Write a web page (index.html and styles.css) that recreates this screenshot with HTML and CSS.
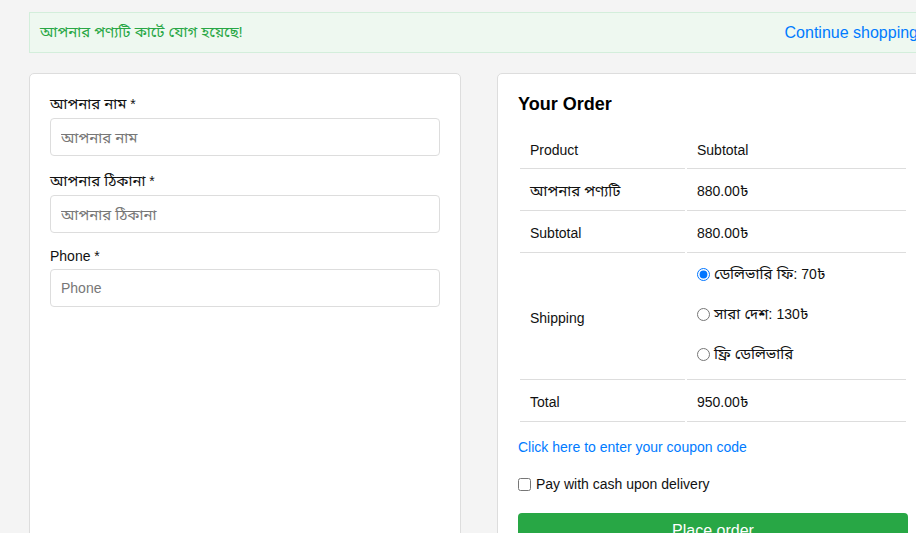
FILE: index.html
```html
<!DOCTYPE html>
<html lang="bn">
<head>
<meta charset="utf-8">
<title>Checkout</title>
<link rel="stylesheet" href="styles.css">
</head>
<body>
<div class="page">
  <div class="alert">
    <span class="alert-text bn">আপনার পণ্যটি কার্টে যোগ হয়েছে!</span>
    <a class="alert-link" href="#">Continue shopping</a>
  </div>
  <div class="columns">
    <form class="card form-card">
      <div class="field">
        <label class="label label-bn"><span class="bn">আপনার নাম</span> *</label>
        <input class="input input-bn" type="text" placeholder="আপনার নাম">
      </div>
      <div class="field">
        <label class="label label-bn"><span class="bn">আপনার ঠিকানা</span> *</label>
        <input class="input input-bn" type="text" placeholder="আপনার ঠিকানা">
      </div>
      <div class="field">
        <label class="label label-en">Phone *</label>
        <input class="input" type="text" placeholder="Phone">
      </div>
    </form>
    <div class="card order-card">
      <h3 class="order-title">Your Order</h3>
      <table class="order-table">
        <colgroup><col class="col-a"><col class="col-b"></colgroup>
        <thead>
          <tr><th>Product</th><th>Subtotal</th></tr>
        </thead>
        <tbody>
          <tr><td><span class="bn">আপনার পণ্যটি</span></td><td>880.00<span class="bn">৳</span></td></tr>
          <tr><td>Subtotal</td><td>880.00<span class="bn">৳</span></td></tr>
          <tr>
            <td>Shipping</td>
            <td class="ship-cell">
              <ul class="ship-list">
                <li><label class="ship-opt"><input type="radio" name="ship" checked><span class="bn">ডেলিভারি ফি:</span>&nbsp;70<span class="bn">৳</span></label></li>
                <li><label class="ship-opt"><input type="radio" name="ship"><span class="bn">সারা দেশ:</span>&nbsp;130<span class="bn">৳</span></label></li>
                <li><label class="ship-opt"><input type="radio" name="ship"><span class="bn">ফ্রি ডেলিভারি</span></label></li>
              </ul>
            </td>
          </tr>
          <tr><td>Total</td><td>950.00<span class="bn">৳</span></td></tr>
        </tbody>
      </table>
      <a class="coupon" href="#">Click here to enter your coupon code</a>
      <label class="cod"><input type="checkbox">Pay with cash upon delivery</label>
      <button class="place" type="button">Place order</button>
    </div>
  </div>
</div>
</body>
</html>
```
FILE: styles.css
```css
html, body {
  margin: 0;
  padding: 0;
  background: #f4f4f4;
  overflow: hidden;
}
body {
  font-family: "Liberation Sans", "Noto Sans Bengali", "Lohit Bengali", "FreeSans", sans-serif;
  font-size: 14px;
  color: #111;
}
.bn {
  font-size: 15px;
}
.page {
  width: 900px;
  padding: 12px 0 0 29px;
}
.alert {
  display: flex;
  justify-content: space-between;
  align-items: center;
  background: #eef8f0;
  border: 1px solid #d3eedb;
  padding: 0 10px;
  height: 39px;
}
.alert-text {
  color: #28a745;
}
.alert-link {
  color: #007bff;
  text-decoration: none;
  font-size: 16px;
}
.columns {
  display: flex;
  gap: 36px;
  margin-top: 20px;
  align-items: stretch;
}
.card {
  box-sizing: border-box;
  width: 432px;
  background: #fff;
  border: 1px solid #ddd;
  border-radius: 5px;
  padding: 20px;
  min-height: 600px;
}
.field {
  display: flex;
  flex-direction: column;
  margin-bottom: 15px;
}
.label {
  display: block;
  margin-bottom: 5px;
  color: #111;
}
.label-bn { height: 19px; line-height: 19px; }
.label-en { height: 16px; line-height: 16px; }
.input {
  box-sizing: border-box;
  height: 38px;
  width: 100%;
  border: 1px solid #ddd;
  border-radius: 4px;
  padding: 0 10px;
  font-family: inherit;
  font-size: 14px;
  color: #333;
  margin: 0;
}
.input-bn { font-size: 15px; }
.input::placeholder { color: #777; }
.order-title {
  margin: 0 0 12px;
  font-size: 18px;
  font-weight: bold;
  color: #000;
}
.order-table {
  width: 100%;
  border-collapse: separate;
  border-spacing: 2px;
  table-layout: fixed;
}
.col-a { width: 165px; }
.order-table th,
.order-table td {
  text-align: left;
  font-weight: normal;
  border-bottom: 1px solid #ddd;
  padding: 10px 10px 9px;
  height: 20px;
  line-height: 20px;
  vertical-align: middle;
  color: #111;
}
.order-table th { padding: 11px 10px 8px; }
.order-table td.ship-cell { padding: 9px 10px 15px; }
.ship-list {
  list-style: none;
  margin: 0;
  padding: 0;
  display: flex;
  flex-direction: column;
  gap: 20px;
}
.ship-opt {
  display: flex;
  align-items: center;
  height: 20px;
}
.ship-opt input {
  margin: 0 4px 0 0;
  width: 13px;
  height: 13px;
}
.coupon {
  display: block;
  margin-top: 13px;
  line-height: 20px;
  color: #007bff;
  text-decoration: none;
}
.cod {
  display: flex;
  align-items: center;
  margin-top: 17px;
  line-height: 20px;
}
.cod input {
  margin: 0 5px 0 0;
  width: 13px;
  height: 13px;
}
.place {
  display: block;
  width: 100%;
  margin-top: 19px;
  background: #28a745;
  color: #fff;
  border: 0;
  border-radius: 4px;
  font-family: inherit;
  font-size: 16px;
  padding: 9px 10px;
  line-height: 18px;
}
```
